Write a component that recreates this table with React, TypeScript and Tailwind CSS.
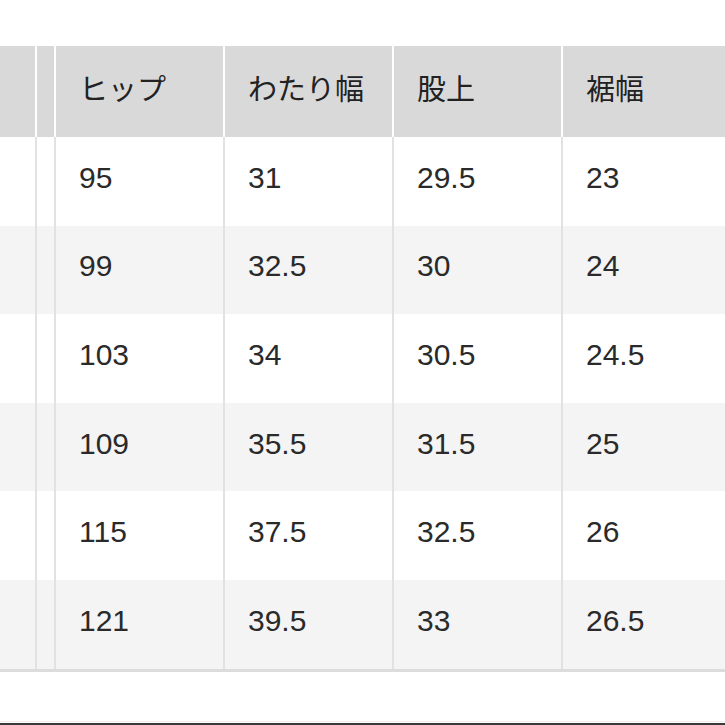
const HEADERS = ["ヒップ", "わたり幅", "股上", "裾幅"];

const ROWS = [
  ["95", "31", "29.5", "23"],
  ["99", "32.5", "30", "24"],
  ["103", "34", "30.5", "24.5"],
  ["109", "35.5", "31.5", "25"],
  ["115", "37.5", "32.5", "26"],
  ["121", "39.5", "33", "26.5"],
];

const FONT = { fontFamily: '"Liberation Sans", "Noto Sans CJK JP", sans-serif' };

export default function App() {
  return (
    <div className="w-[725px] h-[725px] bg-white overflow-hidden flex flex-col text-[#222]" style={FONT}>
      <div className="h-[46px] shrink-0" />

      {/* table, cut at the left edge */}
      <div className="flex flex-col border-b-[3px] border-[#dcdcdc]">
        <div className="flex h-[91px] bg-[#d9d9d9]">
          <div className="w-[37px] shrink-0 border-r-2 border-white" />
          <div className="w-[19px] shrink-0 border-r-2 border-white" />
          {HEADERS.map((h, i) => (
            <div
              key={h}
              className={`flex items-center pl-[23px] pb-[2px] text-[29px] font-normal shrink-0 ${i < 3 ? "w-[169px] border-r-2 border-white" : "flex-1"}`}
            >
              {h}
            </div>
          ))}
        </div>

        {ROWS.map((row, r) => (
          <div key={r} className={`flex h-[88.6px] ${r % 2 === 1 ? "bg-[#f4f4f4]" : "bg-white"}`}>
            <div className="w-[37px] shrink-0 border-r-2 border-[#e2e2e2]" />
            <div className="w-[19px] shrink-0 border-r-2 border-[#e2e2e2]" />
            {row.map((v, i) => (
              <div
                key={i}
                className={`flex items-center pl-[23px] pb-[8px] text-[30px] text-[#2a2a2a] shrink-0 ${i < 3 ? "w-[169px] border-r-2 border-[#e2e2e2]" : "flex-1"}`}
              >
                {v}
              </div>
            ))}
          </div>
        ))}
      </div>

      <div className="flex-1" />
      <div className="h-[1px] bg-[#eeeeee]" />
      <div className="h-[1px] bg-white" />
      <div className="h-[2px] bg-[#3a3a3a]" />
    </div>
  );
}
